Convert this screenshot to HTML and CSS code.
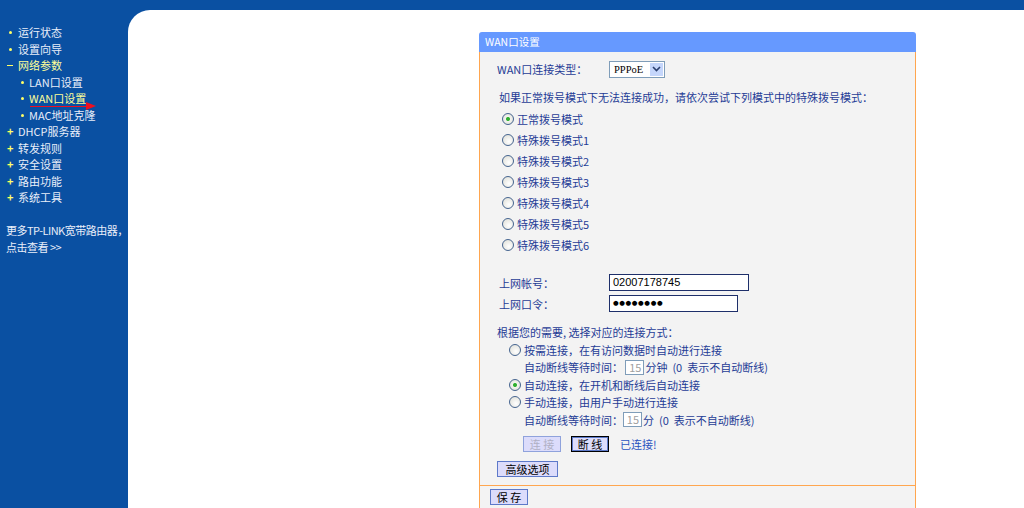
FILE: index.html
```html
<!DOCTYPE html>
<html lang="zh-CN">
<head>
    <meta charset="UTF-8">
    <title>WAN口设置</title>
    <link rel="stylesheet" href="styles.css">
</head>
<body>
    <div class="topbar"></div>
    <div class="main">
        <nav class="side">
            <ul class="menu">
                <li class="dot">运行状态</li>
                <li class="dot">设置向导</li>
                <li class="open active">网络参数</li>
                <li class="sub">LAN口设置</li>
                <li class="sub active">WAN口设置</li>
                <li class="sub">MAC地址克隆</li>
                <li class="plus">DHCP服务器</li>
                <li class="plus">转发规则</li>
                <li class="plus">安全设置</li>
                <li class="plus">路由功能</li>
                <li class="plus">系统工具</li>
            </ul>
            <p class="more">更多TP-LINK宽带路由器，<br>点击查看 &gt;&gt;</p>
            <div class="arrow"></div>
        </nav>

        <div class="content">
            <div class="panel">
                <div class="panel-head">WAN口设置</div>
                <div class="panel-body">
                    <div class="row r-type">
                        <span class="label">WAN口连接类型：</span>
                        <span class="select">PPPoE<span class="select-btn"><svg width="9" height="6" viewBox="0 0 9 6"><path d="M1 1 L4.5 4.5 L8 1" fill="none" stroke="#2b3f6e" stroke-width="1.6"/></svg></span></span>
                    </div>
                    <div class="row r-hint">如果正常拨号模式下无法连接成功，请依次尝试下列模式中的特殊拨号模式：</div>
                    <div class="modes">
                        <label class="radio"><input type="radio" name="mode" checked>正常拨号模式</label>
                        <label class="radio"><input type="radio" name="mode">特殊拨号模式1</label>
                        <label class="radio"><input type="radio" name="mode">特殊拨号模式2</label>
                        <label class="radio"><input type="radio" name="mode">特殊拨号模式3</label>
                        <label class="radio"><input type="radio" name="mode">特殊拨号模式4</label>
                        <label class="radio"><input type="radio" name="mode">特殊拨号模式5</label>
                        <label class="radio"><input type="radio" name="mode">特殊拨号模式6</label>
                    </div>
                    <div class="row r-acct">
                        <span class="label">上网帐号：</span>
                        <span class="text-box acct">02007178745</span>
                    </div>
                    <div class="row r-acct">
                        <span class="label">上网口令：</span>
                        <span class="text-box pass">●●●●●●●●</span>
                    </div>
                    <div class="row r-choose">根据您的需要, 选择对应的连接方式：</div>
                    <div class="conn">
                        <label class="radio"><input type="radio" name="conn">按需连接，在有访问数据时自动进行连接</label>
                        <div class="wait">自动断线等待时间： <span class="num">15</span>分钟  (0  表示不自动断线)</div>
                        <label class="radio"><input type="radio" name="conn" checked>自动连接，在开机和断线后自动连接</label>
                        <label class="radio"><input type="radio" name="conn">手动连接，由用户手动进行连接</label>
                        <div class="wait">自动断线等待时间：<span class="num">15</span>分  (0  表示不自动断线)</div>
                    </div>
                    <div class="actions">
                        <button class="btn off" disabled>连 接</button>
                        <button class="btn focus">断 线</button>
                        <span class="status">已连接!</span>
                    </div>
                    <div class="adv"><button class="btn wide">高级选项</button></div>
                </div>
                <div class="panel-foot"><button class="btn">保 存</button></div>
            </div>
        </div>
    </div>
</body>
</html>
```

FILE: styles.css
```css
body {
    margin: 0;
    height: 508px;
    overflow: hidden;
    background: #0a50a2;
    font-family: "Noto Sans CJK SC", "Liberation Sans", sans-serif;
    font-size: 11px;
}
.topbar {
    height: 10px;
}
.main {
    display: flex;
    height: 498px;
}

/* left menu */
.side {
    position: relative;
    width: 128px;
    flex: none;
    overflow: hidden;
    white-space: nowrap;
    color: #e9eef9;
}
.menu {
    list-style: none;
    margin: 14px 0 0;
    padding: 0;
}
.menu li {
    height: 16.5px;
    line-height: 16.5px;
    padding-left: 18px;
    position: relative;
}
.menu li::before {
    position: absolute;
    color: #ffff66;
}
.menu .dot::before {
    content: "";
    left: 9px;
    top: 7px;
    width: 3px;
    height: 3px;
    border-radius: 50%;
    background: #ffff66;
}
.menu .open::before {
    content: "";
    left: 7px;
    top: 8px;
    width: 6px;
    height: 1px;
    background: #ffff66;
}
.menu .plus::before {
    content: "+";
    left: 7px;
    top: 0;
    font-weight: bold;
    font-size: 11px;
}
.menu .sub {
    padding-left: 29px;
}
.menu .sub::before {
    content: "";
    left: 21px;
    top: 7px;
    width: 3px;
    height: 3px;
    border-radius: 50%;
    background: #ffff66;
}
.menu .active {
    color: #ffff99;
}
.more {
    margin: 16px 0 0 6px;
    line-height: 17px;
    letter-spacing: -0.5px;
}
.arrow {
    position: absolute;
    z-index: 2;
    left: 30px;
    top: 95.5px;
    width: 57px;
    height: 1.5px;
    background: #ee1020;
}
.arrow::after {
    content: "";
    position: absolute;
    left: 56px;
    top: -4px;
    border-left: 10px solid #ee1020;
    border-top: 4.75px solid transparent;
    border-bottom: 4.75px solid transparent;
}

/* content */
.content {
    flex: 1;
    background: #fff;
    border-top-left-radius: 22px;
    padding: 22px 0 0 351px;
}
.panel {
    width: 437px;
    color: #1f3c96;
}
.panel-head {
    height: 20px;
    line-height: 20px;
    padding-left: 6px;
    background: #6699ff;
    color: #fff;
    font-size: 10.5px;
    border-radius: 3px 3px 0 0;
}
.panel-body {
    background: #f3f3f3;
    border-left: 1px solid #ffa64f;
    border-right: 1px solid #ffa64f;
    border-bottom: 1px solid #ffa64f;
    padding: 7px 0 8px 0;
}
.row {
    display: flex;
    align-items: center;
}
.label {
    flex: none;
}
.r-type {
    height: 20px;
    padding-left: 17px;
}
.r-type .label {
    width: 112px;
}
.select {
    position: relative;
    width: 50px;
    height: 15px;
    line-height: 15px;
    border: 1px solid #7f9db9;
    background: #fff;
    color: #000;
    font-family: "Liberation Serif", serif;
    font-size: 10.5px;
    padding-left: 4px;
}
.select-btn {
    position: absolute;
    right: 1px;
    top: 1px;
    width: 13px;
    height: 13px;
    background: #c5d6fb;
    display: flex;
    align-items: center;
    justify-content: center;
}
.r-hint {
    height: 19px;
    margin-top: 8px;
    padding-left: 19px;
}
.modes {
    margin-top: 2px;
    padding-left: 22px;
}
.modes .radio {
    height: 21px;
}
.radio {
    display: flex;
    align-items: center;
}
.radio input {
    appearance: none;
    -webkit-appearance: none;
    margin: 0 3px 0 0;
    width: 12px;
    height: 12px;
    border-radius: 50%;
    border: 1px solid #45648f;
    background: radial-gradient(circle at 60% 65%, #ffffff 0, #e3e3dc 80%);
    box-sizing: border-box;
}
.radio input:checked {
    background: radial-gradient(circle, #2aa52a 0, #3cb83c 1.8px, #f4f4f0 2.3px, #e3e3dc 80%);
}
.r-acct {
    height: 21px;
    padding-left: 19px;
}
.modes + .r-acct {
    margin-top: 17px;
}
.r-acct .label {
    width: 110px;
}
.text-box {
    height: 15px;
    line-height: 15px;
    border: 1px solid #1e2f6a;
    background: #fff;
    color: #000;
    padding-left: 3px;
}
.acct {
    width: 135px;
    font-family: "Liberation Sans", sans-serif;
    font-size: 11px;
}
.pass {
    width: 124px;
    font-family: "DejaVu Sans", sans-serif;
    font-size: 6.5px;
    letter-spacing: 0.6px;
}
.r-choose {
    height: 18px;
    margin-top: 9px;
    padding-left: 17px;
}
.conn {
    padding-left: 29px;
}
.conn .radio,
.conn .wait {
    height: 17.5px;
}
.wait {
    display: flex;
    align-items: center;
    padding-left: 15px;
    white-space: pre;
}
.num {
    width: 15px;
    height: 13px;
    line-height: 13px;
    border: 1px solid #7f9db9;
    background: #fff;
    color: #a0a0a0;
    text-align: right;
    padding-right: 2px;
    margin: 0 1px 0 0;
}
.actions {
    display: flex;
    align-items: center;
    gap: 10px;
    margin-top: 7.5px;
    padding-left: 43px;
}
.btn {
    height: 16px;
    width: 38px;
    padding: 0;
    border: 1px solid #5d79c9;
    background: #dcdcfb;
    color: #000;
    font-family: "Noto Sans CJK SC", sans-serif;
    font-size: 11px;
    line-height: 14px;
}
.btn.off {
    color: #b0b0c4;
    border-color: #8fa2dc;
}
.btn.focus {
    border: 1px solid #000;
    box-shadow: inset 0 0 0 1px #5d79c9;
}
.status {
    margin-left: 1px;
    color: #2a52c0;
}
.adv {
    margin-top: 9px;
    padding-left: 17px;
}
.btn.wide {
    width: 61px;
}
.panel-foot {
    background: #f3f3f3;
    border-left: 1px solid #ffa64f;
    border-right: 1px solid #ffa64f;
    padding: 3px 0 10px 10px;
}
```
